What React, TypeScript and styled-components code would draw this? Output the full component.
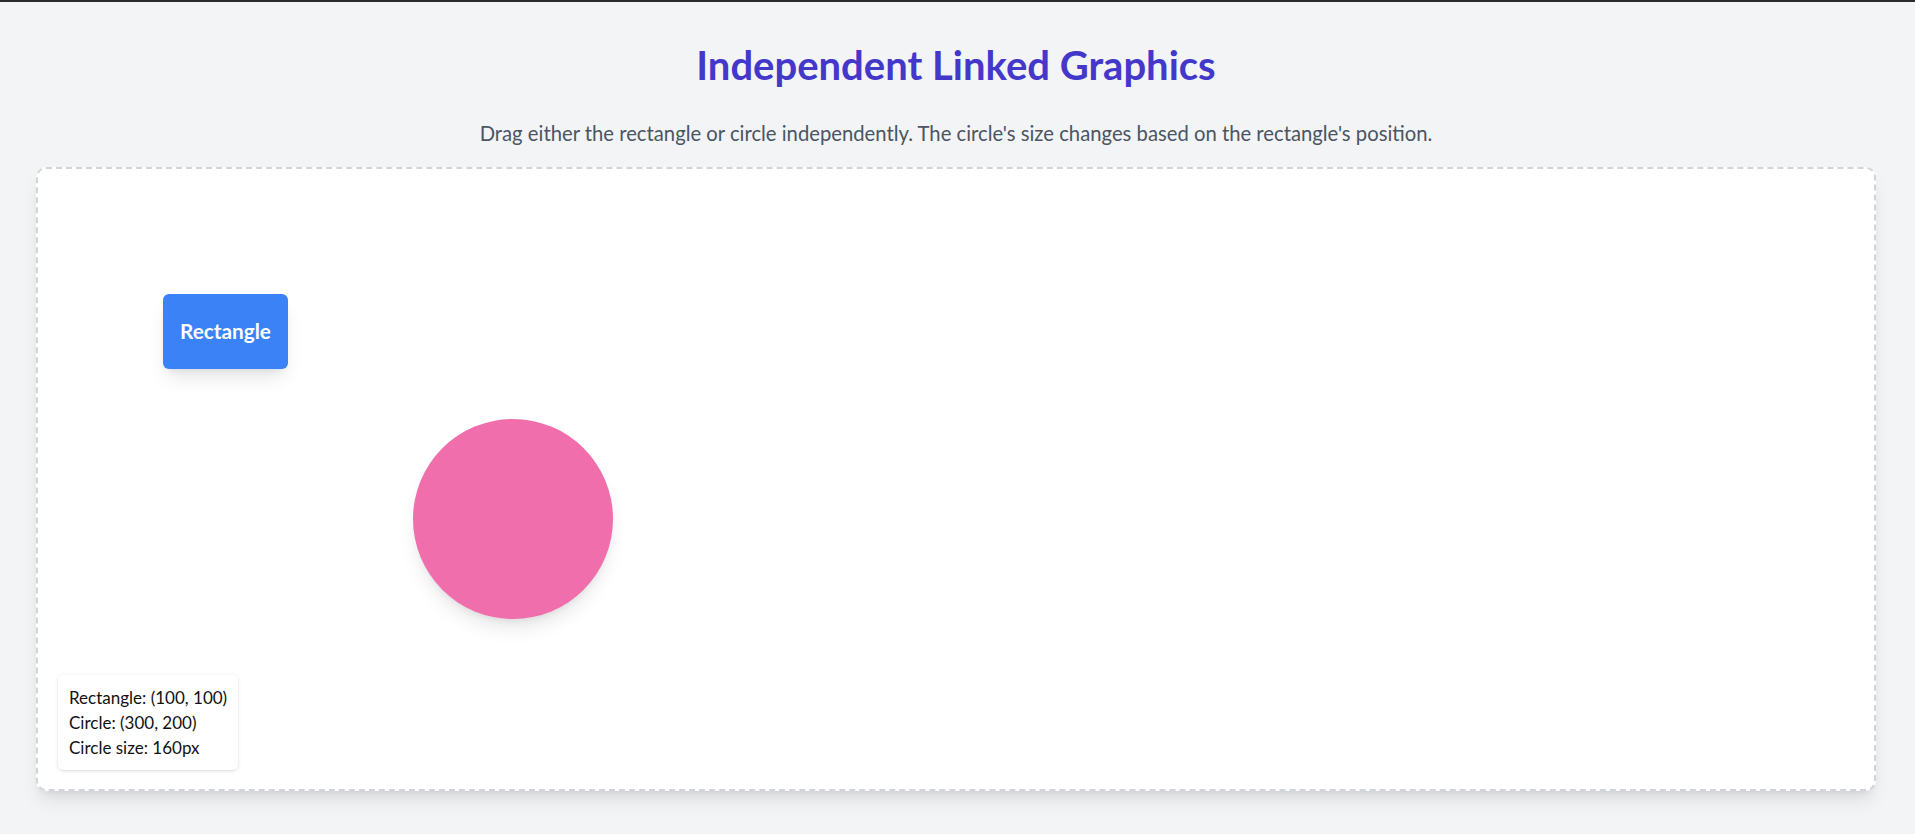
import React from "react";
import styled, { createGlobalStyle } from "styled-components";

const GlobalStyle = createGlobalStyle`
  html, body {
    margin: 0;
    padding: 0;
    background: #f3f4f6;
  }
  body {
    font-family: Lato, "Noto Sans", sans-serif;
    color: #111827;
  }
  * { box-sizing: border-box; }
`;

const TopBar = styled.div`
  height: 2px;
  background: #2b2b2d;
`;

const Page = styled.div`
  display: flex;
  flex-direction: column;
  align-items: stretch;
  padding: 38.5px 39px 40px 36px;
`;

const Title = styled.h1`
  margin: 0;
  font-size: 40px;
  line-height: 48px;
  font-weight: 700;
  color: #4338ca;
  text-align: center;
`;

const Subtitle = styled.p`
  margin: 30px 0 20px;
  font-size: 20.25px;
  line-height: 28px;
  color: #4b5563;
  text-align: center;
`;

const Canvas = styled.div`
  position: relative;
  height: 624px;
  background: #ffffff;
  border: 2px dashed #d1d5db;
  border-radius: 10px;
  box-shadow: 0 12px 19px -4px rgba(0, 0, 0, 0.1),
    0 5px 8px -5px rgba(0, 0, 0, 0.1);
  overflow: hidden;
`;

const Rect = styled.div<{ $x: number; $y: number }>`
  position: absolute;
  left: ${(p) => p.$x}px;
  top: ${(p) => p.$y}px;
  width: 125px;
  height: 75px;
  border-radius: 6px;
  background: #3b82f6;
  color: #ffffff;
  font-size: 20.75px;
  font-weight: 700;
  display: flex;
  align-items: center;
  justify-content: center;
  box-shadow: 0 12px 19px -4px rgba(0, 0, 0, 0.1),
    0 5px 8px -5px rgba(0, 0, 0, 0.1);
  cursor: move;
  user-select: none;
`;

const Circle = styled.div<{ $x: number; $y: number; $size: number }>`
  position: absolute;
  left: ${(p) => p.$x}px;
  top: ${(p) => p.$y}px;
  width: ${(p) => p.$size}px;
  height: ${(p) => p.$size}px;
  border-radius: 50%;
  background: #f06eab;
  box-shadow: 0 12px 19px -4px rgba(0, 0, 0, 0.1),
    0 5px 8px -5px rgba(0, 0, 0, 0.1);
  cursor: move;
`;

const Info = styled.div`
  position: absolute;
  left: 20px;
  bottom: 19px;
  display: flex;
  flex-direction: column;
  background: #ffffff;
  border-radius: 5px;
  padding: 10px 11px;
  font-size: 17px;
  line-height: 25px;
  color: #111;
  box-shadow: 0 1px 4px rgba(0, 0, 0, 0.1), 0 1px 2px rgba(0, 0, 0, 0.06);
`;

const InfoLine = styled.span`
  display: block;
  white-space: nowrap;
`;

export default function App() {
  const rect = { x: 100, y: 100 };
  const circle = { x: 300, y: 200 };
  const size = 160;
  const s = 1.25;
  return (
    <>
      <GlobalStyle />
      <TopBar />
      <Page>
        <Title>Independent Linked Graphics</Title>
        <Subtitle>
          Drag either the rectangle or circle independently. The circle's size
          changes based on the rectangle's position.
        </Subtitle>
        <Canvas>
          <Rect $x={rect.x * s} $y={rect.y * s}>
            Rectangle
          </Rect>
          <Circle $x={circle.x * s} $y={circle.y * s} $size={size * s} />
          <Info>
            <InfoLine>
              Rectangle: ({rect.x}, {rect.y})
            </InfoLine>
            <InfoLine>
              Circle: ({circle.x}, {circle.y})
            </InfoLine>
            <InfoLine>Circle size: {size}px</InfoLine>
          </Info>
        </Canvas>
      </Page>
    </>
  );
}
